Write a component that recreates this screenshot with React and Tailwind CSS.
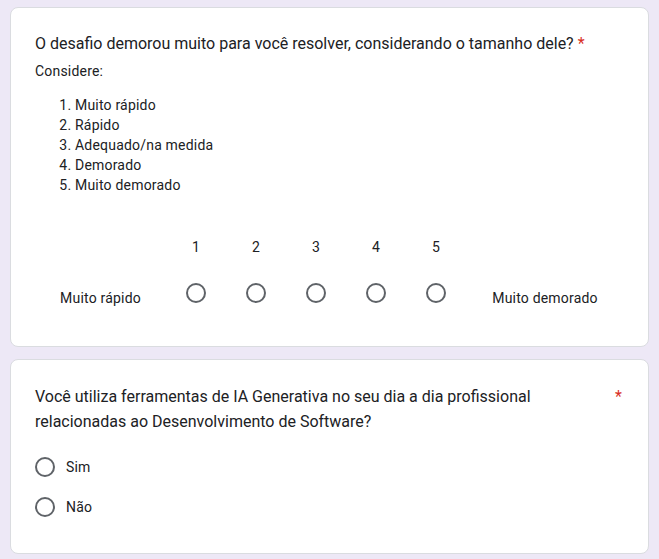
import React from "react";

const Radio = () => (
  <span className="block w-5 h-5 rounded-full border-2 border-[#5f6368] bg-white" />
);

const ScaleQuestion = () => {
  const values = [1, 2, 3, 4, 5];
  return (
    <div className="bg-white border border-[#dadce0] rounded-lg px-6 pt-6 pb-[38px]">
      <p className="text-base leading-6 text-[#202124]">
        O desafio demorou muito para você resolver, considerando o tamanho dele?{" "}
        <span className="text-[#d93025]">*</span>
      </p>
      <p className="mt-[5px] text-sm leading-5 tracking-[0.2px] text-[#202124]">Considere:</p>
      <ol className="mt-[14px] list-decimal pl-[40px] text-sm leading-5 tracking-[0.2px] text-[#202124]">
        <li>Muito rápido</li>
        <li>Rápido</li>
        <li>Adequado/na medida</li>
        <li>Demorado</li>
        <li>Muito demorado</li>
      </ol>
      <div className="mt-[42px] flex text-sm tracking-[0.2px] text-[#202124]">
        <div className="w-[131px]" />
        {values.map((v) => (
          <div key={v} className="w-[60px] text-center leading-5">
            {v}
          </div>
        ))}
      </div>
      <div className="mt-[21px] flex items-center text-sm tracking-[0.2px] text-[#202124]">
        <div className="w-[131px] text-center pt-[10px]">Muito rápido</div>
        {values.map((v) => (
          <div key={v} className="w-[60px] flex justify-center">
            <Radio />
          </div>
        ))}
        <div className="flex-1 text-center pt-[10px]">Muito demorado</div>
      </div>
    </div>
  );
};

const YesNoQuestion = () => (
  <div className="bg-white border border-[#dadce0] rounded-lg px-6 pt-6 pb-[36px]">
    <div className="flex justify-between text-base leading-[25px] text-[#202124]">
      <p className="max-w-[560px]">
        Você utiliza ferramentas de IA Generativa no seu dia a dia profissional
        relacionadas ao Desenvolvimento de Software?
      </p>
      <span className="text-[#d93025] pr-[2px]">*</span>
    </div>
    <div className="mt-[23px] flex flex-col gap-5 text-sm tracking-[0.2px] text-[#202124]">
      {["Sim", "Não"].map((opt) => (
        <label key={opt} className="flex items-center gap-[11px] h-5">
          <Radio />
          <span>{opt}</span>
        </label>
      ))}
    </div>
  </div>
);

export default function App() {
  return (
    <div
      className="min-h-screen bg-[#ede8f6] px-[10px] pt-[7px] pb-4 flex flex-col gap-3"
      style={{ fontFamily: "Roboto, 'Liberation Sans', Arial, sans-serif" }}
    >
      <ScaleQuestion />
      <YesNoQuestion />
    </div>
  );
}
